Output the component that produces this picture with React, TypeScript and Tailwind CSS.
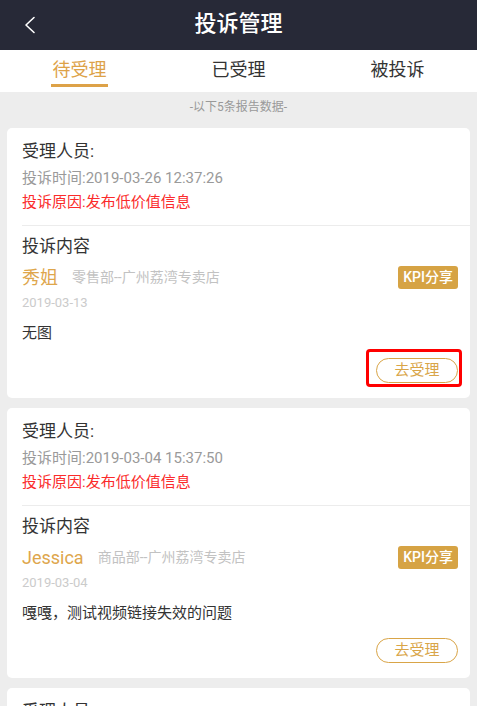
import React from 'react';

const font = "font-['Roboto','Noto_Sans_CJK_SC',sans-serif]";

const complaints = [
  {
    id: 1,
    time: '2019-03-26 12:37:26',
    reason: '发布低价值信息',
    name: '秀姐',
    dept: '零售部--广州荔湾专卖店',
    date: '2019-03-13',
    content: '无图',
    marked: true,
  },
  {
    id: 2,
    time: '2019-03-04 15:37:50',
    reason: '发布低价值信息',
    name: 'Jessica',
    dept: '商品部--广州荔湾专卖店',
    date: '2019-03-04',
    content: '嘎嘎，测试视频链接失效的问题',
    marked: false,
  },
  {
    id: 3,
    time: '2019-03-01 10:12:08',
    reason: '发布低价值信息',
    name: '秀姐',
    dept: '零售部--广州荔湾专卖店',
    date: '2019-03-01',
    content: '无图',
    marked: false,
  },
];

const tabs = ['待受理', '已受理', '被投诉'];

const ComplaintCard = ({ item }: any) => {
  return (
    <div className="bg-white rounded-[5px] h-[270px] flex flex-col">
      <div className="pl-[15px] pr-[12px] pt-[12px] pb-[11px]">
        <p className="text-[17px] leading-[22px] text-[#333]">受理人员:</p>
        <p className="mt-[4px] text-[15px] leading-[24px] text-[#9a9a9a]">投诉时间:{item.time}</p>
        <p className="text-[15px] leading-[24px] text-[#fb2b2b]">投诉原因:{item.reason}</p>
      </div>
      <div className="ml-[15px] border-t border-[#ececec] pr-[12px] pt-[8px]">
        <p className="text-[17px] leading-[24px] text-[#333]">投诉内容</p>
        <div className="mt-[8px] h-[23px] flex items-center justify-between">
          <div className="flex items-center">
            <span className="text-[18px] leading-[23px] text-[#dea64c]">{item.name}</span>
            <span className="ml-[14px] text-[14px] leading-[23px] text-[#c2c2c2]">{item.dept}</span>
          </div>
          <span className="h-[23px] px-[5px] rounded-[3px] bg-[#d6a344] text-white text-[14px] leading-[23px] font-medium">
            KPI分享
          </span>
        </div>
        <p className="mt-[5px] text-[13px] leading-[18px] text-[#cbcbcb]">{item.date}</p>
        <p className="mt-[10px] text-[15px] leading-[22px] text-[#333]">{item.content}</p>
        <div className="mt-[14px] flex justify-end">
          <div className="relative">
            <button className="w-[82px] h-[25px] rounded-full border border-[#d9a548] text-[#d9a548] text-[15px] leading-[23px]">
              去受理
            </button>
            {item.marked && (
              <div className="absolute -left-[10px] -top-[9px] -right-[4px] -bottom-[4px] border-[3px] border-[#ff0000] rounded-[4px]" />
            )}
          </div>
        </div>
      </div>
    </div>
  );
};

const App = () => {
  const [active, setActive] = React.useState(0);

  return (
    <div className={`${font} min-h-screen bg-[#ededed]`}>
      <div className="h-[50px] bg-[#272937] flex items-center relative">
        <svg className="absolute left-[24px] top-[16px]" width="12" height="18" viewBox="0 0 12 18" fill="none">
          <path d="M10 1.5 L2 9 L10 16.5" stroke="white" strokeWidth="1.6" strokeLinecap="round" strokeLinejoin="round" />
        </svg>
        <h1 className="w-full text-center text-white text-[22px] leading-[30px] font-medium -mt-[2px]">投诉管理</h1>
      </div>

      <div className="h-[42px] bg-white grid grid-cols-3">
        {tabs.map((tab, i) => (
          <button key={tab} onClick={() => setActive(i)} className="flex flex-col items-center pt-[8px]">
            <span className={`text-[18px] leading-[24px] ${active === i ? 'text-[#dda248]' : 'text-[#333]'}`}>{tab}</span>
            <span className={`mt-[2px] w-[57px] h-[3px] ${active === i ? 'bg-[#dda248]' : 'bg-transparent'}`} />
          </button>
        ))}
      </div>

      <p className="pt-[7px] pb-[13px] text-center text-[12px] leading-[16px] text-[#999]">-以下5条报告数据-</p>

      <div className="px-[7px] flex flex-col gap-[10px] pb-[10px]">
        {complaints.map(item => (
          <ComplaintCard key={item.id} item={item} />
        ))}
      </div>
    </div>
  );
};

export default App;
